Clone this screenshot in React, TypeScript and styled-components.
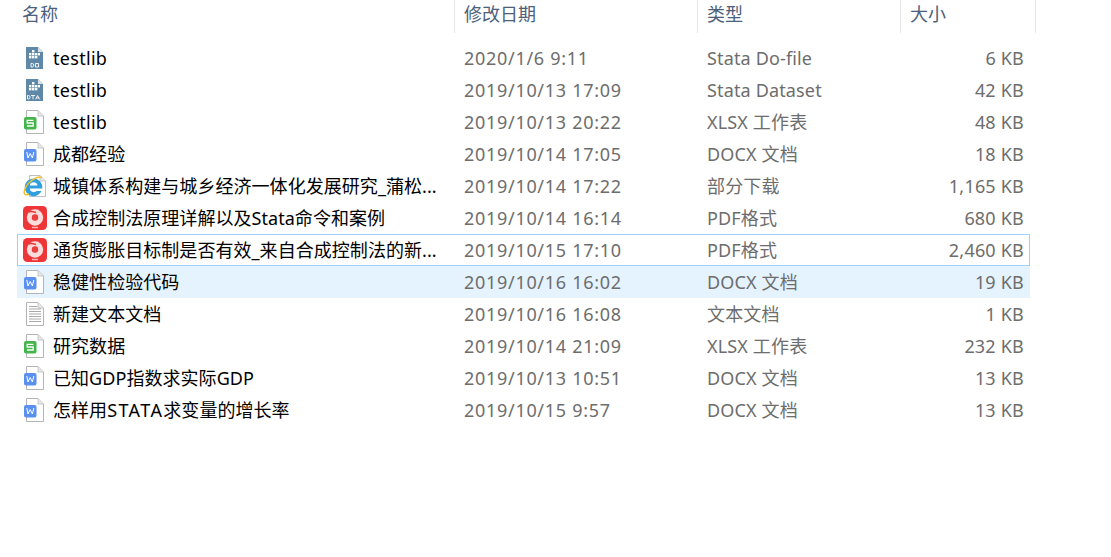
import React from 'react';
import styled, { createGlobalStyle } from 'styled-components';

const GlobalStyle = createGlobalStyle`
    html, body {
        margin: 0;
        padding: 0;
        background: #fff;
    }
    body {
        font-family: 'Noto Sans', 'Noto Sans CJK SC', sans-serif;
        font-size: 18px;
    }
`;

const columns = '437px 243px 203px 128px';

const Page = styled.div`
    width: 1111px;
    height: 557px;
    overflow: hidden;
`;

const Header = styled.div`
    display: grid;
    grid-template-columns: 455px 243px 203px 135px;
    height: 33px;
    margin-bottom: 9px;
`;

const HeaderCell = styled.div<{ $first?: boolean }>`
    height: 33px;
    box-sizing: border-box;
    padding-left: ${(props) => (props.$first ? '22px' : '9px')};
    border-right: 1px solid #e5e5e5;
    color: #4c607a;
    font-size: 18px;
    line-height: 28px;
`;

const List = styled.div`
    display: flex;
    flex-direction: column;
    width: 1013px;
    margin-left: 17px;
`;

const Row = styled.div<{ $state?: 'focus' | 'selected' }>`
    display: grid;
    grid-template-columns: ${columns};
    align-items: center;
    height: 32px;
    box-sizing: border-box;
    border: 1px solid ${(props) => (props.$state === 'focus' ? '#99d1ff' : 'transparent')};
    background: ${(props) => (props.$state === 'selected' ? '#e5f3ff' : 'transparent')};
`;

const NameCell = styled.div`
    display: flex;
    align-items: center;
    gap: 5px;
    padding-left: 4px;
    color: #000;
    white-space: nowrap;
`;

// cjk lines sit a pixel higher than latin ones in the original
const NameText = styled.span<{ $raised?: boolean; $spacing?: number }>`
    margin-bottom: ${(props) => (props.$raised ? '2px' : '0')};
    letter-spacing: ${(props) => props.$spacing ?? 0.05}px;
`;

const WideRun = styled.span`
    letter-spacing: 1.4px;
`;

const IconBox = styled.span`
    display: flex;
    width: 26px;
    height: 26px;
    flex: none;
`;

const DateCell = styled.div`
    color: #6d6d6d;
    padding-left: 9px;
    letter-spacing: 0.7px;
    white-space: nowrap;
`;

const TypeCell = styled.div<{ $raised?: boolean }>`
    color: #6d6d6d;
    padding-left: 9px;
    margin-bottom: ${(props) => (props.$raised ? '2px' : '0')};
    letter-spacing: 0.15px;
    white-space: nowrap;
`;

const SizeCell = styled.div`
    color: #6d6d6d;
    text-align: right;
    padding-right: 5px;
    letter-spacing: 0.2px;
    white-space: nowrap;
`;

const Paper = () => (
    <>
        <path d="M4.5 1.5H16L21.5 7V24.5H4.5Z" fill="#fff" stroke="#b4b4b4" />
        <path d="M16 1.5V7H21.5" fill="#e6e6e6" stroke="#c8c8c8" />
    </>
);

const DocIcon = ({ color, letter }: { color: string; letter: 'W' | 'S' }) => (
    <svg width="26" height="26" viewBox="0 0 26 26">
        <Paper />
        <rect x="2" y="8" width="12.5" height="12.5" rx="2" fill={color} />
        {letter === 'W' ? (
            <path d="M4.8 11L6 17L8.2 12.5L10.4 17L11.8 11" fill="none" stroke="#fff" strokeWidth="1" />
        ) : (
            <path d="M11.5 11.3H5.2V14H11.2V17H5" fill="none" stroke="#fff" strokeWidth="1.3" />
        )}
    </svg>
);

const StataIcon = ({ kind }: { kind: 'do' | 'dta' }) => (
    <svg width="26" height="26" viewBox="0 0 26 26">
        <path d="M4 2H16L21 7V24H4Z" fill="#5f87a8" />
        <path d="M16 2L21 7H16Z" fill="#d9e2ea" />
        <g fill="#fff">
            <rect x="10" y="5" width="2.4" height="2.4" />
            <rect x="7" y="8" width="2.4" height="2.4" />
            <rect x="10" y="8" width="2.4" height="2.4" />
            <rect x="13" y="8" width="2.4" height="2.4" />
            <rect x="16" y="8" width="2" height="2.4" />
            <rect x="7" y="11" width="2.4" height="2.4" />
            <rect x="10" y="11" width="2.4" height="2.4" />
            <rect x="13" y="11" width="2.4" height="2.4" />
        </g>
        {kind === 'do' ? (
            <path
                d="M9 18.5V22H10.2Q11.8 22 11.8 20.2Q11.8 18.5 10.2 18.5ZM13.5 18.5H16.5V22H13.5Z"
                fill="none"
                stroke="#fff"
                strokeWidth="0.9"
            />
        ) : (
            <path
                d="M5.5 18.5V22H6.6Q8 22 8 20.2Q8 18.5 6.6 18.5ZM9 18.5H13M11 18.5V22.3M13.6 22.3L15.6 18.5L17.6 22.3M14.4 21H16.8"
                fill="none"
                stroke="#fff"
                strokeWidth="0.9"
            />
        )}
    </svg>
);

const IeIcon = () => (
    <svg width="26" height="26" viewBox="0 0 26 26">
        <path d="M7.5 2.5H18L23.5 8V23.5H7.5Z" fill="#fff" stroke="#c0c0c0" />
        <path d="M18 2.5V8H23.5" fill="#e6e6e6" stroke="#c8c8c8" />
        <path
            d="M11.5 5.5A8.8 8.8 0 0 0 2.7 14.3A8.8 8.8 0 0 0 19.5 18H14.6A4.2 4.2 0 0 1 7.6 15.4H20.3A8.8 8.8 0 0 0 11.5 5.5ZM7.7 12.4A4 4 0 0 1 15.5 12.4Z"
            fill="#2f9fe0"
            fillRule="evenodd"
        />
        <path d="M20 4.5C15 2.5 5.5 8.5 2.5 17C1.2 21 3 23 7 21" fill="none" stroke="#f3c02c" strokeWidth="1.4" />
    </svg>
);

const PdfIcon = () => (
    <svg width="26" height="26" viewBox="0 0 26 26">
        <rect x="1" y="1" width="24" height="24" rx="4.5" fill="#ee3537" />
        <circle cx="13" cy="12.5" r="5.7" fill="none" stroke="#fcdcda" strokeWidth="5" />
        <circle cx="13" cy="12.5" r="2.6" fill="#e8403f" />
        <path d="M14 7.5C11 6.5 8.5 6 6.5 7" fill="none" stroke="#ee3537" strokeWidth="1.4" />
        <rect x="10" y="21.8" width="6" height="1.4" fill="#f7b5b3" />
    </svg>
);

const TextIcon = () => (
    <svg width="26" height="26" viewBox="0 0 26 26">
        <Paper />
        <path
            d="M7 5.5H15M7 8H19M7 10.5H19M7 13H19M7 15.5H19M7 18H19M7 20.5H19"
            stroke="#a9a9a9"
            strokeWidth="1"
        />
    </svg>
);

const icons = {
    do: <StataIcon kind="do" />,
    dta: <StataIcon kind="dta" />,
    xlsx: <DocIcon color="#43b54a" letter="S" />,
    docx: <DocIcon color="#5a90f0" letter="W" />,
    ie: <IeIcon />,
    pdf: <PdfIcon />,
    txt: <TextIcon />,
};

interface IFile {
    icon: keyof typeof icons;
    name: string;
    date: string;
    type: string;
    size: string;
    state?: 'focus' | 'selected';
}

const files: IFile[] = [
    { icon: 'do', name: 'testlib', date: '2020/1/6 9:11', type: 'Stata Do-file', size: '6 KB' },
    { icon: 'dta', name: 'testlib', date: '2019/10/13 17:09', type: 'Stata Dataset', size: '42 KB' },
    { icon: 'xlsx', name: 'testlib', date: '2019/10/13 20:22', type: 'XLSX 工作表', size: '48 KB' },
    { icon: 'docx', name: '成都经验', date: '2019/10/14 17:05', type: 'DOCX 文档', size: '18 KB' },
    { icon: 'ie', name: '城镇体系构建与城乡经济一体化发展研究_蒲松...', date: '2019/10/14 17:22', type: '部分下载', size: '1,165 KB' },
    { icon: 'pdf', name: '合成控制法原理详解以及Stata命令和案例', date: '2019/10/14 16:14', type: 'PDF格式', size: '680 KB' },
    { icon: 'pdf', name: '通货膨胀目标制是否有效_来自合成控制法的新...', date: '2019/10/15 17:10', type: 'PDF格式', size: '2,460 KB', state: 'focus' },
    { icon: 'docx', name: '稳健性检验代码', date: '2019/10/16 16:02', type: 'DOCX 文档', size: '19 KB', state: 'selected' },
    { icon: 'txt', name: '新建文本文档', date: '2019/10/16 16:08', type: '文本文档', size: '1 KB' },
    { icon: 'xlsx', name: '研究数据', date: '2019/10/14 21:09', type: 'XLSX 工作表', size: '232 KB' },
    { icon: 'docx', name: '已知GDP指数求实际GDP', date: '2019/10/13 10:51', type: 'DOCX 文档', size: '13 KB' },
    { icon: 'docx', name: '怎样用STATA求变量的增长率', date: '2019/10/15 9:57', type: 'DOCX 文档', size: '13 KB' },
];

const hasCjk = (text: string) => /[^\x00-\x7f]/.test(text);

function App() {
    return (
        <Page>
            <GlobalStyle />
            <Header>
                <HeaderCell $first>名称</HeaderCell>
                <HeaderCell>修改日期</HeaderCell>
                <HeaderCell>类型</HeaderCell>
                <HeaderCell>大小</HeaderCell>
            </Header>
            <List>
                {files.map((file, index) => (
                    <Row key={index} $state={file.state}>
                        <NameCell>
                            <IconBox>{icons[file.icon]}</IconBox>
                            <NameText $raised={hasCjk(file.name)} $spacing={hasCjk(file.name) ? undefined : 0.3}>
                                {file.name.split(/(STATA)/).map((part, i) =>
                                    part === 'STATA' ? <WideRun key={i}>{part}</WideRun> : part,
                                )}
                            </NameText>
                        </NameCell>
                        <DateCell>{file.date}</DateCell>
                        <TypeCell $raised={hasCjk(file.type)}>{file.type}</TypeCell>
                        <SizeCell>{file.size}</SizeCell>
                    </Row>
                ))}
            </List>
        </Page>
    );
}

export default App;
